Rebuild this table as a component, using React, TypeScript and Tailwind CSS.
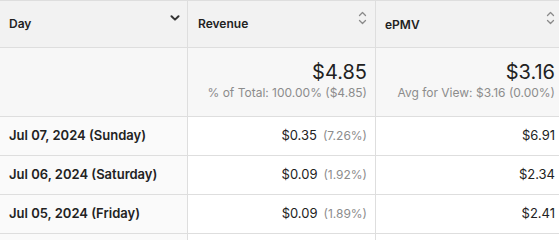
import React from "react";

const rows = [
  { day: "Jul 07, 2024 (Sunday)", revenue: "$0.35", pct: "(7.26%)", epmv: "$6.91" },
  { day: "Jul 06, 2024 (Saturday)", revenue: "$0.09", pct: "(1.92%)", epmv: "$2.34" },
  { day: "Jul 05, 2024 (Friday)", revenue: "$0.09", pct: "(1.89%)", epmv: "$2.41" },
  { day: "", revenue: "", pct: "", epmv: "" },
];

function SortIcon() {
  return (
    <svg width="9" height="14" viewBox="0 0 9 14" fill="none" stroke="#8a8a8a" strokeWidth={1.3} strokeLinecap="round" strokeLinejoin="round">
      <path d="M1.5 4.5 4.5 1.5 7.5 4.5" />
      <path d="M1.5 9.5 4.5 12.5 7.5 9.5" />
    </svg>
  );
}

function ChevronDown() {
  return (
    <svg width="10" height="6" viewBox="0 0 10 6" fill="none" stroke="#333" strokeWidth={2} strokeLinecap="round" strokeLinejoin="round">
      <path d="M1.5 1.2 5 4.6 8.5 1.2" />
    </svg>
  );
}

export default function App() {
  return (
    <div className="w-[559px] h-[240px] overflow-hidden bg-white font-['Inter',sans-serif] text-[#222]">
      <div className="grid grid-cols-[188px_188px_188px] w-[564px] border-t border-[#dedede]">
        {/* header */}
        <div className="h-[47px] bg-[#f2f2f2] border-r border-b border-[#dedede] flex items-center justify-between pl-[9px] pr-[7px]">
          <span className="text-[12px] font-semibold">Day</span>
          <span className="-mt-[13px]"><ChevronDown /></span>
        </div>
        <div className="h-[47px] bg-[#f2f2f2] border-r border-b border-[#dedede] flex items-center justify-between pl-[10px] pr-[8px]">
          <span className="text-[12px] font-semibold">Revenue</span>
          <span className="-mt-[13px]"><SortIcon /></span>
        </div>
        <div className="h-[47px] bg-[#f2f2f2] border-r border-b border-[#dedede] flex items-center justify-between pl-[9px] pr-[8px]">
          <span className="text-[12px] font-semibold mt-[2px]">ePMV</span>
          <span className="-mt-[13px]"><SortIcon /></span>
        </div>

        {/* summary */}
        <div className="h-[69px] bg-[#f7f7f7] border-r border-b border-[#dedede]" />
        <div className="h-[69px] bg-[#f7f7f7] border-r border-b border-[#dedede] flex flex-col items-end pr-[8px] pt-[12px]">
          <span className="text-[20px] leading-[24px]">$4.85</span>
          <span className="text-[12px] leading-[16px] text-[#8c8c8c] mt-[1px]">% of Total: 100.00% ($4.85)</span>
        </div>
        <div className="h-[69px] bg-[#f7f7f7] border-r border-b border-[#dedede] flex flex-col items-end pr-[8px] pt-[12px]">
          <span className="text-[20px] leading-[24px]">$3.16</span>
          <span className="text-[12px] leading-[16px] text-[#8c8c8c] mt-[1px]">Avg for View: $3.16 (0.00%)</span>
        </div>

        {/* rows */}
        {rows.map((r, i) => (
          <React.Fragment key={i}>
            <div className="h-[39px] bg-[#fafafa] border-r border-b border-[#dedede] flex items-center pl-[9px]">
              <span className="text-[13px] font-semibold">{r.day}</span>
            </div>
            <div className="h-[39px] bg-white border-r border-b border-[#dedede] flex items-center justify-end gap-[6px] pr-[8px]">
              <span className="text-[13px]">{r.revenue}</span>
              <span className="text-[12px] text-[#8c8c8c]">{r.pct}</span>
            </div>
            <div className="h-[39px] bg-white border-r border-b border-[#dedede] flex items-center justify-end pr-[8px]">
              <span className="text-[13px]">{r.epmv}</span>
            </div>
          </React.Fragment>
        ))}
      </div>
    </div>
  );
}
